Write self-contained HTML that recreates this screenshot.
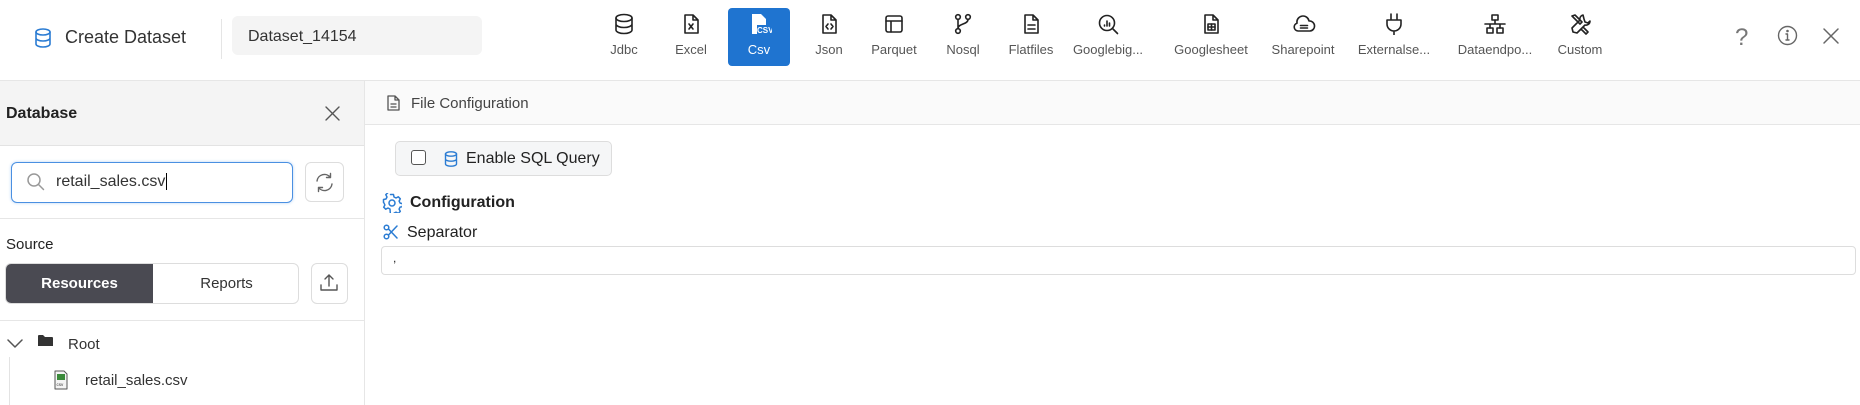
<!DOCTYPE html>
<html><head><meta charset="utf-8"><style>
*{box-sizing:border-box;margin:0;padding:0}
body{width:1860px;height:405px;overflow:hidden;background:#fff;font-family:"Liberation Sans",Arial,sans-serif;color:#222;position:relative}
.a{position:absolute}
.nav{position:absolute;top:8px;width:70px;height:58px;text-align:center;font-size:13px;color:#555}
.nav svg{position:absolute;left:50%;top:5px;margin-left:-11px}
.nav span{position:absolute;left:-10px;right:-10px;top:34px;white-space:nowrap}
svg{fill:none;stroke:#222;stroke-width:1.6;stroke-linecap:round;stroke-linejoin:round}
.blue{stroke:#2b7cd3}
</style></head><body>
<!-- header -->
<svg class="a blue" style="left:34px;top:28px" width="18" height="20" viewBox="0 0 18 20"><ellipse cx="9" cy="4" rx="7" ry="3"/><path d="M2 4v12c0 1.7 3.1 3 7 3s7-1.3 7-3V4M2 10c0 1.7 3.1 3 7 3s7-1.3 7-3"/></svg>
<div class="a" style="left:65px;top:27px;font-size:18px;color:#333">Create Dataset</div>
<div class="a" style="left:221px;top:19px;width:1px;height:40px;background:#e5e5e5"></div>
<div class="a" style="left:232px;top:16px;width:250px;height:39px;background:#f4f4f4;border-radius:6px;font-size:16px;color:#333;padding:12px 16px 0">Dataset_14154</div>

<div class="nav" style="left:589px"><svg width="22" height="22" viewBox="0 0 22 22"><ellipse cx="11" cy="5" rx="8" ry="3.5"/><path d="M3 5v12c0 1.9 3.6 3.5 8 3.5s8-1.6 8-3.5V5M3 11c0 1.9 3.6 3.5 8 3.5s8-1.6 8-3.5"/></svg><span>Jdbc</span></div>
<div class="nav" style="left:656px"><svg width="22" height="22" viewBox="0 0 22 22"><path d="M5 2h8l5 5v13H5z M13 2v5h5"/><path d="M9 11l4 5M13 11l-4 5"/></svg><span>Excel</span></div>
<div class="a" style="left:728px;top:8px;width:62px;height:58px;background:#1f74d0;border-radius:4px"></div>
<div class="nav" style="left:724px;color:#fff"><svg width="24" height="22" viewBox="0 0 24 22" style="fill:#fff;stroke:none"><path d="M4 1h9l5 5v6H9v9H4z"/><text x="9" y="20" font-size="8" font-weight="bold" fill="#fff" font-family="Liberation Sans">CSV</text></svg><span>Csv</span></div>
<div class="nav" style="left:794px"><svg width="22" height="22" viewBox="0 0 22 22"><path d="M5 2h8l5 5v13H5z M13 2v5h5"/><path d="M10 11l-2 2.5 2 2.5M13 11l2 2.5-2 2.5"/></svg><span>Json</span></div>
<div class="nav" style="left:859px"><svg width="22" height="22" viewBox="0 0 22 22"><rect x="3" y="3" width="16" height="16" rx="2"/><path d="M3 8h16M8 8v11"/></svg><span>Parquet</span></div>
<div class="nav" style="left:928px"><svg width="22" height="22" viewBox="0 0 22 22"><circle cx="6" cy="4" r="2.3"/><circle cx="16" cy="4" r="2.3"/><circle cx="6" cy="18" r="2.3"/><path d="M6 6.5v9M16 6.5c0 5-10 4-10 9"/></svg><span>Nosql</span></div>
<div class="nav" style="left:996px"><svg width="22" height="22" viewBox="0 0 22 22"><path d="M5 2h8l5 5v13H5z M13 2v5h5M8 12h7M8 16h7"/></svg><span>Flatfiles</span></div>
<div class="nav" style="left:1073px"><svg width="22" height="22" viewBox="0 0 22 22"><circle cx="10" cy="10" r="7.5"/><path d="M15.5 15.5l5 5M7.5 12v1M10 8v5M12.5 10v3"/></svg><span>Googlebig...</span></div>
<div class="nav" style="left:1176px"><svg width="22" height="22" viewBox="0 0 22 22"><path d="M5 2h8l5 5v13H5z M13 2v5h5"/><rect x="8" y="11" width="7" height="6"/><path d="M8 14h7M11.5 11v6"/></svg><span>Googlesheet</span></div>
<div class="nav" style="left:1268px"><svg width="24" height="22" viewBox="0 0 24 22"><path d="M6 18a4 4 0 0 1-1-7.8A6 6 0 0 1 17 8a4.5 4.5 0 0 1 1 10z M8.5 12.5h7M8.5 15h7"/></svg><span>Sharepoint</span></div>
<div class="nav" style="left:1359px"><svg width="22" height="22" viewBox="0 0 22 22"><path d="M8 1v6M14 1v6M4 7h14v4a7 7 0 0 1-14 0zM11 18v4"/></svg><span>Externalse...</span></div>
<div class="nav" style="left:1460px"><svg width="22" height="22" viewBox="0 0 22 22"><rect x="8" y="2" width="6" height="5"/><rect x="3" y="15" width="6" height="5"/><rect x="13" y="15" width="6" height="5"/><path d="M11 7v4M1 11h20M6 11v4M16 11v4"/></svg><span>Dataendpo...</span></div>
<div class="nav" style="left:1545px"><svg width="22" height="22" viewBox="0 0 22 22"><path d="M3 3l3-1 7 7-2 2-7-7zM14 2a4 4 0 0 0-3 5L3 15l1 4 4 1 8-8a4 4 0 0 0 5-4l-2 2-3-1-1-3zM14 14l5 5-2 2-5-5"/></svg><span>Custom</span></div>

<div class="a" style="left:1735px;top:24px;font-size:24px;color:#777;font-weight:300">?</div>
<svg class="a" style="left:1777px;top:25px;stroke:#666;stroke-width:1.4" width="21" height="21" viewBox="0 0 21 21"><circle cx="10.5" cy="10.5" r="9"/><path d="M10.5 9v6M9 15h3M9 9h1.5"/><circle cx="10.5" cy="6" r=".6" fill="#666"/></svg>
<svg class="a" style="left:1822px;top:27px;stroke:#666;stroke-width:1.5" width="18" height="18" viewBox="0 0 18 18"><path d="M2 2l14 14M16 2L2 16"/></svg>

<div class="a" style="left:0;top:80px;width:1860px;height:1px;background:#e6e6e6"></div>
<!-- left panel -->
<div class="a" style="left:0;top:81px;width:364px;height:65px;background:#f4f4f4;border-bottom:1px solid #e3e3e3"></div>
<div class="a" style="left:364px;top:81px;width:1px;height:324px;background:#e6e6e6"></div>
<div class="a" style="left:6px;top:105px;font-size:16px;font-weight:bold;color:#222">Database</div>
<svg class="a" style="left:325px;top:106px;stroke:#555;stroke-width:1.4" width="15" height="15" viewBox="0 0 15 15"><path d="M1 1l13 13M14 1L1 14"/></svg>
<div class="a" style="left:11px;top:162px;width:282px;height:41px;border:1.5px solid #4a90e2;border-radius:6px;box-shadow:0 0 3px #b9d4f3"></div>
<svg class="a" style="left:26px;top:172px;stroke:#999;stroke-width:1.5" width="20" height="20" viewBox="0 0 20 20"><circle cx="8" cy="8" r="6"/><path d="M12.5 12.5l5 5"/></svg>
<div class="a" style="left:56px;top:173px;font-size:16px;color:#333">retail_sales.csv<span style="border-left:1px solid #000;margin-left:1px"></span></div>
<div class="a" style="left:305px;top:162px;width:39px;height:40px;border:1px solid #ddd;border-radius:6px"></div>
<svg class="a" style="left:314px;top:172px;stroke:#666;stroke-width:1.4" width="21" height="21" viewBox="0 0 21 21"><path d="M3 9a7.5 7.5 0 0 1 13.5-3.5M18 12a7.5 7.5 0 0 1-13.5 3.5M16.5 1.5v4h-4M4.5 19.5v-4h4"/></svg>
<div class="a" style="left:0;top:218px;width:364px;height:1px;background:#e6e6e6"></div>
<div class="a" style="left:6px;top:236px;font-size:15px;color:#222">Source</div>
<div class="a" style="left:5px;top:263px;width:294px;height:41px;border:1px solid #ddd;border-radius:6px;overflow:hidden">
<div style="position:absolute;left:0;top:0;width:147px;height:41px;background:#4a4a52;color:#fff;font-size:15px;font-weight:bold;text-align:center;line-height:40px">Resources</div>
<div style="position:absolute;left:147px;top:0;width:147px;height:41px;color:#333;font-size:15px;text-align:center;line-height:40px">Reports</div></div>
<div class="a" style="left:311px;top:263px;width:37px;height:41px;border:1px solid #ddd;border-radius:6px"></div>
<svg class="a" style="left:319px;top:273px;stroke:#555;stroke-width:1.4" width="20" height="20" viewBox="0 0 20 20"><path d="M10 13V2M6 6l4-4 4 4M2 12v5h16v-5"/></svg>
<div class="a" style="left:0;top:320px;width:364px;height:1px;background:#e6e6e6"></div>
<svg class="a" style="left:7px;top:338px;stroke:#555;stroke-width:1.5" width="16" height="12" viewBox="0 0 16 12"><path d="M1 2l7 7 7-7"/></svg>
<svg class="a" style="left:38px;top:334px" width="15" height="13" viewBox="0 0 15 13"><path style="fill:#333;stroke:none" d="M0 2a1 1 0 0 1 1-1h4l2 2h7a1 1 0 0 1 1 1v8H0z"/></svg>
<div class="a" style="left:68px;top:336px;font-size:15px;color:#333">Root</div>
<div class="a" style="left:9px;top:357px;width:1px;height:48px;background:#e3e3e3"></div>
<svg class="a" style="left:54px;top:370px" width="14" height="20" viewBox="0 0 14 20"><path style="fill:#f4f4f4;stroke:#555;stroke-width:1" d="M1 1h9l3 3v15H1z"/><rect x="3" y="4" width="8" height="6" style="fill:#3a8a3a;stroke:none"/><text x="2.5" y="16" font-size="4.5" fill="#333" stroke="none" font-family="Liberation Sans">csv</text></svg>
<div class="a" style="left:85px;top:372px;font-size:15px;color:#333">retail_sales.csv</div>
<!-- right -->
<div class="a" style="left:365px;top:81px;width:1495px;height:44px;background:#fafafa;border-bottom:1px solid #e6e6e6"></div>
<svg class="a" style="left:387px;top:95px;stroke:#555;stroke-width:1.3" width="13" height="16" viewBox="0 0 13 16"><path d="M1 1h7l4 4v10H1z M8 1v4h4M4 9h5M4 12h5"/></svg>
<div class="a" style="left:411px;top:95px;font-size:15px;color:#444">File Configuration</div>
<div class="a" style="left:395px;top:141px;width:217px;height:35px;background:#f5f6f7;border:1px solid #ddd;border-radius:5px"></div>
<div class="a" style="left:411px;top:150px;width:15px;height:15px;border:1.5px solid #555;border-radius:3px;background:#fff"></div>
<svg class="a blue" style="left:444px;top:151px;stroke-width:1.4" width="14" height="16" viewBox="0 0 14 16"><ellipse cx="7" cy="3" rx="5.5" ry="2.2"/><path d="M1.5 3v10c0 1.2 2.5 2.2 5.5 2.2s5.5-1 5.5-2.2V3M1.5 8c0 1.2 2.5 2.2 5.5 2.2s5.5-1 5.5-2.2"/></svg>
<div class="a" style="left:466px;top:150px;font-size:16px;color:#222">Enable SQL Query</div>
<svg class="a blue" style="left:382px;top:193px;stroke-width:1.5" width="20" height="20" viewBox="0 0 20 20"><circle cx="10" cy="10" r="3"/><path d="M8.5 1.5h3l.5 2.5 2 1 2.3-1.2 2 2-1.2 2.3 1 2 2.5.5v3l-2.5.5-1 2 1.2 2.3-2 2-2.3-1.2-2 1-.5 2.5h-3L8 16l-2-1-2.3 1.2-2-2L2.9 12 2 10l-.5-.5v-3L4 6l1-2-1.2-2.3 2-2"/></svg>
<div class="a" style="left:410px;top:194px;font-size:16px;font-weight:bold;color:#222">Configuration</div>
<svg class="a blue" style="left:383px;top:224px;stroke-width:1.5" width="15" height="16" viewBox="0 0 15 16"><circle cx="3.5" cy="3.5" r="2.3"/><circle cx="3.5" cy="12.5" r="2.3"/><path d="M5.5 5L14 14M5.5 11L14 2"/></svg>
<div class="a" style="left:407px;top:224px;font-size:16px;color:#222">Separator</div>
<div class="a" style="left:381px;top:246px;width:1475px;height:29px;border:1px solid #ddd;border-radius:4px;font-size:12px;padding:4px 11px">,</div>
</body></html>
